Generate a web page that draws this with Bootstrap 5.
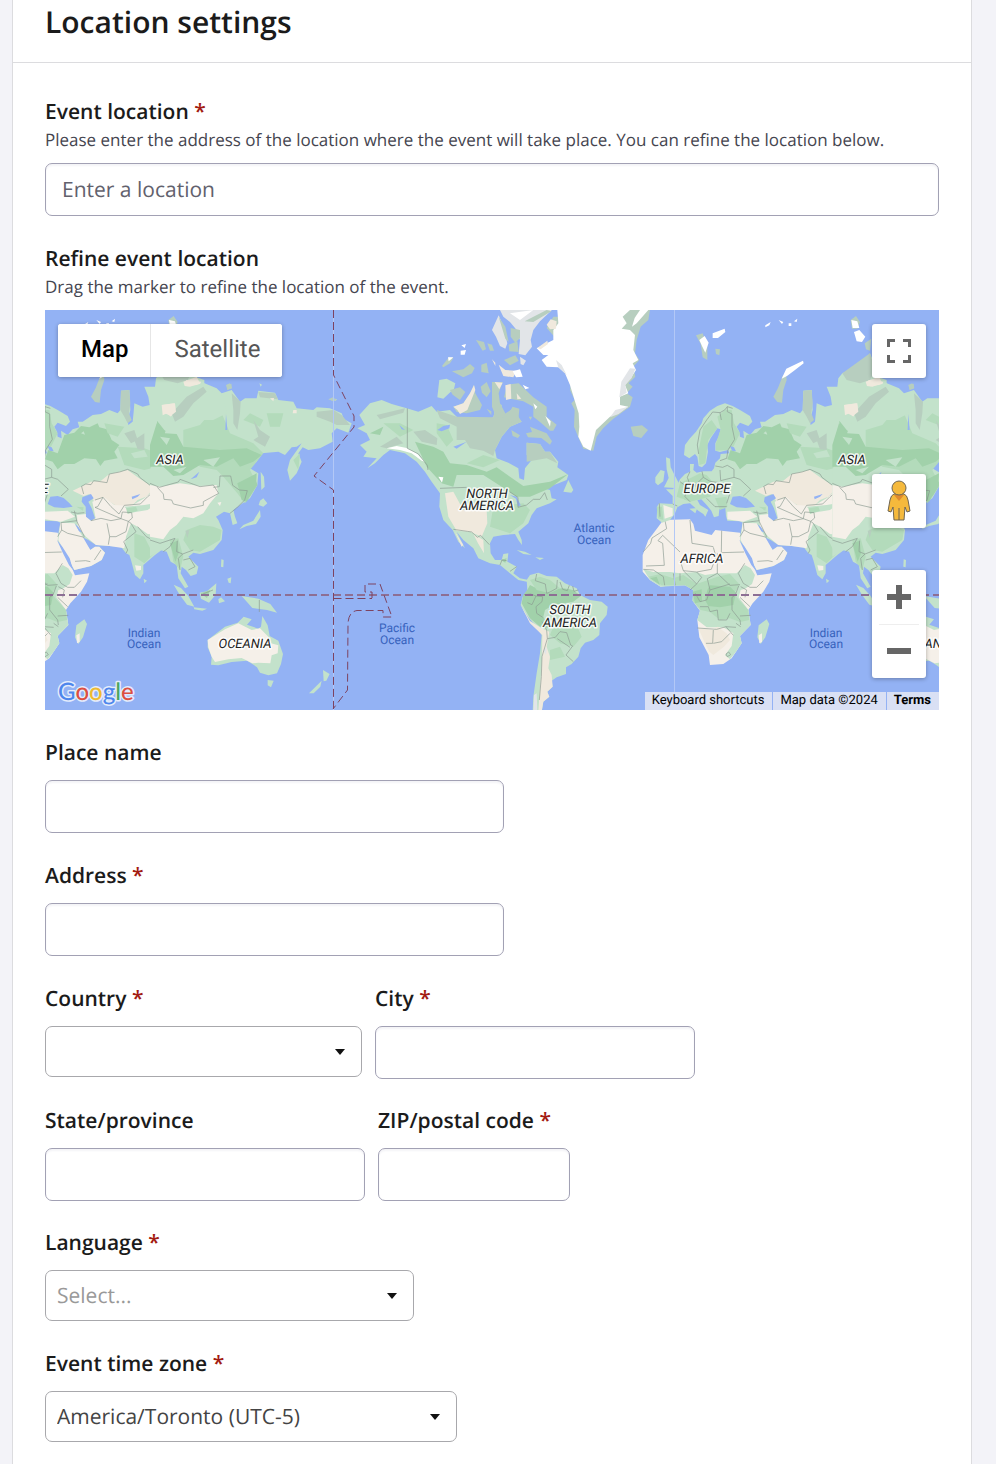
<!DOCTYPE html>
<html lang="en">
<head>
<meta charset="utf-8">
<meta name="viewport" content="width=device-width, initial-scale=1">
<title>Location settings</title>
<link href="https://cdn.jsdelivr.net/npm/bootstrap@5.3.0/dist/css/bootstrap.min.css" rel="stylesheet">
<style>
body { background: #f3f3f8; font-family: "Open Sans", sans-serif; color: #1b1b1b; text-rendering: geometricPrecision; }
.panel { margin: 0 24px 0 12px; background: #fff; border: 1px solid #dcdcdf; border-width: 0 1px; min-height: 100vh; padding-bottom: 23px; }
.panel-head { padding: 0 32px 18px; border-bottom: 1px solid #dcdcdf; }
.panel-head h1 { font-size: 30px; line-height: 44px; font-weight: 600; margin: 0; }
.panel-body { padding: 35px 32px 0; }
.field { margin-bottom: 29px; }
.field-row { margin-bottom: 28px; gap: 13px; }
.field-label { display: block; font-size: 21px; line-height: 28px; font-weight: 600; margin-bottom: 13px; }
.field-label.with-help { margin-bottom: 0; }
.req { color: #a31b12; }
.help { font-size: 17px; line-height: 28px; margin: 0 0 9px; color: #45454f; }
.form-control, .form-select { font-size: 21px; line-height: 28px; border-radius: 7px; color: #45454f; text-rendering: geometricPrecision; }
.form-control { height: 53px; padding: 0 16px; border-color: #a2a1b4; box-shadow: inset 0 2px 2px #f4f4f7; }
.form-control::placeholder { color: #62616d; opacity: 1; }
.form-select { height: 51px; padding: 0 40px 0 11px; border-color: #a8a8ac; color: #444;
  background: #fff url("data:image/svg+xml,%3Csvg xmlns='http://www.w3.org/2000/svg' viewBox='0 0 10 6'%3E%3Cpath d='M0 0h10L5 6z' fill='%23111'/%3E%3C/svg%3E") no-repeat right 16px center / 10px 6px; }
.form-select.unset { color: #999; }
.w-half { width: 459px; max-width: 100%; }
.w-country { width: 317px; } .w-city { width: 320px; } .w-zip { width: 192px; }
.w-lang { width: 369px; max-width: 100%; } .w-zone { width: 412px; max-width: 100%; }
.map-box { height: 400px; background: #93b2f4; font-family: Roboto, sans-serif; overflow: hidden; margin-bottom: 29px; }
.map-box > svg { width: 100%; height: 100%; display: block; }
.map-box button { text-rendering: geometricPrecision; }
.map-btn { background: #fff; border: 0; padding: 0; box-shadow: 0 1px 4px rgba(0,0,0,.3); color: #666; }
.map-types { top: 14px; left: 13px; height: 53px; border-radius: 3px; overflow: hidden; background: #fff; box-shadow: 0 1px 4px rgba(0,0,0,.3); }
.map-types button { border: 0; background: #fff; font-size: 24px; line-height: 50px; padding: 0 22px 3px 23px; color: #565656; }
.map-types button.on { font-weight: 500; color: #000; border-right: 1px solid #e6e6e6; }
.map-tools { top: 14px; right: 13px; bottom: 32px; width: 54px; }
.map-tools button { width: 54px; height: 54px; border-radius: 3px; display: flex; align-items: center; justify-content: center; }
.pegman { margin-bottom: 42px; }
.zoomer { background: #fff; border-radius: 3px; box-shadow: 0 1px 4px rgba(0,0,0,.3); }
.zoomer button { border: 0; background: none; box-shadow: none; padding: 0; }
.zoomer hr { margin: 0 7px -1px; border-color: #bbb; }
.map-legal { right: 0; bottom: 0; font-size: 13px; line-height: 18px; gap: 1px; color: #000; }
.map-legal > * { background: #d9e0f4; padding: 0 8px 0 7px; border: 0; color: #000; text-decoration: none; }
.g-logo { font: 500 24px Lato, sans-serif; stroke: #e4ecfc; stroke-width: 3px; paint-order: stroke; stroke-linejoin: round; }
.lbl { font: italic 13px Roboto, sans-serif; fill: #222; text-anchor: middle; stroke: #fff; stroke-width: 3px; stroke-opacity: .85; paint-order: stroke; stroke-linejoin: round; }
.sea { font: 12px Roboto, sans-serif; fill: #3762bd; text-anchor: middle; }
.c1 { fill: #c3e2cb; } .c2 { fill: #b3dbbb; } .c3 { fill: #a1d1aa; } .tundra { fill: #b7cebf; }
.dry { fill: #f5f0e9; } .dry2 { fill: #f0e9dd; } .ice { fill: #fff; } .ice2 { fill: #e2e5e8; } .water { fill: #93b2f4; }
.bd { fill: none; stroke: #8b9a91; stroke-width: 2; stroke-linejoin: round; }
.dash { fill: none; stroke: #7d4360; stroke-width: 1; stroke-dasharray: 8 4; }
.dash.eq { stroke: #8d6f94; stroke-width: 2; }
</style>
</head>
<body>
<main class="panel">
  <header class="panel-head"><h1>Location settings</h1></header>
  <form class="panel-body">
    <div class="field">
      <label class="field-label with-help" for="loc">Event location <span class="req">*</span></label>
      <p class="help" id="locHelp">Please enter the address of the location where the event will take place. You can refine the location below.</p>
      <input class="form-control" id="loc" type="text" placeholder="Enter a location" aria-describedby="locHelp">
    </div>

    <h2 class="field-label with-help">Refine event location</h2>
    <p class="help">Drag the marker to refine the location of the event.</p>
    <div class="map-box position-relative">
      <svg viewBox="0 0 894 400" preserveAspectRatio="xMidYMid slice" role="img" aria-label="World map">
        <defs>
          <g id="oldworld">
            <!-- Africa -->
            <g transform="translate(-292 600)">
              <path class="dry" d="M100 30L180 28 190 42 195 62 245 75 256 60 275 62 330 68 345 110 365 155 382 196 425 190 418 215 400 245 368 280 355 300 362 345 330 378 335 400 318 425 305 445 280 462 240 465 236 435 208 382 202 330 210 302 188 272 190 240 165 226 120 226 92 230 60 210 38 185 38 135 55 90 85 50z"/>
              <path class="c1" d="M40 178L70 186 120 186 150 190 200 186 225 195 262 190 320 190 345 165 362 175 375 195 366 222 345 236 332 240 326 262 340 280 355 300 362 345 330 378 335 400 318 425 300 448 285 436 305 408 310 370 280 352 230 352 202 330 210 302 188 272 190 240 165 226 92 230 60 210z"/>
              <path class="c2" d="M55 200L90 192 130 205 160 195 200 222 262 200 300 192 330 225 312 250 325 268 355 300 358 330 330 336 300 325 270 330 240 306 212 300 188 272 190 240 165 226 95 226z"/>
              <path class="c3" d="M232 240L240 226 300 230 318 248 310 285 270 292 235 288 225 270zM188 245L215 238 216 275 195 280zM60 205L80 200 90 225z"/>
              <path class="dry2" d="M205 355L250 360 262 350 290 370 300 390 282 410 250 435 238 425 225 400z"/>
              <path class="bd" d="M105 32L110 56 66 84 62 100 40 125M84 92L98 76 150 126M84 92L98 100 103 166 48 168M180 30L186 100 250 110M275 62L274 128 342 126M250 112L258 140 244 178 200 186 160 182 150 150M262 130L262 190 300 226 330 224M40 178L70 180 100 200 104 226M130 190L136 226M150 190L150 212M160 182L200 222 180 240M200 186L215 202 200 222M262 190L232 206 240 240 230 270 210 275 196 250M240 240L300 222M344 160L325 190 340 220 360 232 380 232 400 212M326 228L316 255 306 262 306 300 330 330 332 345M332 230L350 240 345 262M330 262L360 290M362 316L330 318M318 340L332 350M210 290L235 290 240 305 262 300 265 330 290 330 300 310M202 354L260 358 288 350 318 352M250 360L248 400 228 400M250 400L275 395 300 370M288 350L310 376M288 432L296 426 302 434 292 440z"/>
            </g>
            <!-- Europe and western Asia -->
            <g transform="translate(-262 240)">
              <path class="c1" d="M255 40L232 48 210 62 190 85 185 100 168 125 150 145 135 165 132 195 148 205 165 192 172 200 176 228 186 232 198 220 204 185 202 165 212 145 225 125 232 115 242 118 236 140 226 160 226 182 240 186 264 180 268 190 242 192 240 205 226 218 222 235 215 244 190 244 170 248 160 240 162 222 150 222 150 245 135 252 120 268 112 285 98 298 78 298 98 318 98 342 58 340 52 348 50 385 66 398 90 390 104 372 112 352 130 342 150 340 175 362 190 372 196 380 205 360 180 345 172 330 184 328 200 345 214 362 222 382 236 378 238 358 256 354 258 378 262 392 300 394 308 398 302 430 300 452 330 505 350 540 400 528 432 510 442 488 425 470 412 470 398 480 384 462 372 440 392 450 415 465 455 468 490 470 505 490 515 495 520 510 532 555 547 568 557 550 557 525 592 495 612 480 640 482 740 480 740 -30 712 -40 702 -80 690 -110 662 -75 607 -50 595 -35 592 -10 560 -10 572 20 576 45 555 50 530 40 528 65 525 95 512 105 510 92 518 60 515 0 490 2 488 60 480 70 455 60 430 72 405 75 375 95 360 95 365 112 345 118 330 135 310 122 312 145 300 140 298 125 290 110 300 98 325 108 337 95 330 78 300 60 278 48z"/>
              <path class="c3" d="M300 190L320 135 350 128 370 108 395 112 420 100 425 112 448 118 462 150 485 165 470 185 480 205 440 212 428 228 415 208 380 205 350 222 320 222 300 238 285 215 262 208 272 180zM598 92L620 120 640 135 740 160 740 270 690 270 650 250 600 262 590 225 640 230 650 200 600 180z"/>
              <path class="c2" d="M190 110L215 90 232 115 205 150 200 185 196 220 178 225 176 180zM255 60L275 60 282 100 300 130 280 170 262 180 228 182 228 160 242 118 232 80zM480 170L560 175 600 190 600 230 560 240 500 225zM440 100L500 110 480 140 450 130zM120 280L180 250 200 255 230 290 210 320 150 335 110 320zM530 430L560 440 580 480 610 470 560 520 530 500zM225 325L260 320 262 350 240 360zM50 350L66 350 70 390 54 385z"/>
              <path class="c1" d="M370 130L378 124 382 134zM520 190L560 180 570 200 530 205zM600 290L650 270 700 275 660 290z"/>
              <path class="tundra" d="M490 2L515 0 518 40 514 70 522 90 510 100 500 80 488 60zM607 -50L690 -110 705 -60 690 -30 660 -20 620 -30zM500 130L530 120 540 150 520 160zM530 150L560 130 560 180 540 178zM665 80L690 50 720 40 720 70 680 90z"/>
              <path class="dry2" d="M370 290L400 275 430 272 455 252 510 240 540 262 590 295 565 320 540 330 520 350 480 350 440 325 410 335 395 312 378 318 345 302zM612 45L650 40 655 60 640 80 628 70 615 76zM685 -30L730 -25 725 -10 690 -10z"/>
              <path class="dry" d="M404 335L440 322 470 345 520 348 560 325 600 290 630 305 740 290 740 420 650 440 570 432 540 410 520 400 505 440 500 475 455 468 415 465 385 440 360 410 358 375 385 372 400 392 414 385zM308 398L350 400 375 440 398 480 412 470 425 470 442 488 432 510 400 528 350 540 302 450zM262 365L330 362 352 380 310 395 262 388zM70 345L98 355 98 378 74 386z"/>
              <path class="c1" d="M500 350L560 345 600 338 570 360 520 368zM345 345L375 350 382 372 360 368z"/>
              <path class="c2" d="M505 355L535 350 540 362 510 372zM356 350L378 352 376 362z"/>
              <path class="water" d="M270 342L278 320 300 318 318 324 334 338 345 350 318 354 290 352zM374 322L400 312 408 325 392 335 402 355 412 385 400 392 385 380 384 350 372 335zM352 402L362 410 374 428 364 424zM522 320L548 312 540 320 524 328zM560 20L566 40 560 36zM270 168L282 172 288 184 276 182zM298 450L314 470 336 505 346 540 334 525 316 490z"/>
              <path class="bd" d="M278 55L262 50 254 60 240 68 218 66 200 90 180 120 172 165 176 192M240 68L244 90M262 50L262 65 276 72 276 110 284 148 264 180M264 180L260 205 240 212M226 228L248 232 262 226 282 238 282 262 300 268 332 298 310 318M186 244L190 262 210 274 238 278M240 240L242 272 282 262M150 245L142 262 150 285 180 290M120 275L140 290 135 320 150 335M190 262L160 290M225 300L270 310 260 340M200 325L225 350 260 350M58 340L60 380M98 342L112 348M372 290L378 312M370 290L384 282 400 284 408 272 448 278 455 252 486 246 510 238 540 252 546 262 580 288 606 290 570 320 548 342 500 346 484 372 460 350 436 322 412 330M436 322L420 350 412 352 490 386 494 366 522 368 524 384 512 394M606 290L618 300 620 320 650 330 655 342 740 352M606 290L640 285 680 290 700 300M400 392L430 385 460 392 490 386 512 394 505 425 475 440 456 440 452 464M456 440L448 400M350 362L358 395 380 440M310 398L358 392M310 398L312 420 330 430 380 442M312 420L300 440M340 366L360 370 380 368M505 490L510 480 498 455 535 425 520 400 512 394M540 410L566 440 600 458 640 452M398 515L384 512 352 514M430 480L410 510"/>
            </g>
            <!-- Siberia, China and Indochina -->
            <g transform="translate(315 180)">
              <path class="c1" d="M100 50L140 45 160 38 200 55 215 70 245 60 270 95 285 85 320 85 325 62 375 68 385 90 430 95 440 115 490 120 500 112 540 115 575 130 582 148 605 160 595 188 560 175 545 190 548 215 510 235 475 240 458 232 445 250 455 275 440 310 420 332 412 300 420 270 445 235 455 220 440 230 425 232 405 255 385 245 335 250 320 275 300 295 325 310 322 345 300 385 270 405 250 420 255 440 262 460 248 465 240 430 222 425 198 440 205 450 218 480 215 510 190 540 150 552 130 548 115 560 145 590 140 612 122 618 108 600 95 590 92 610 115 650 105 655 85 625 80 585 62 575 50 545 30 540 0 560 0 300z"/>
              <path class="c2" d="M100 180L150 165 180 130 215 130 240 190 310 220 340 250 300 300 322 345 285 400 262 370 220 320 200 300 150 290 100 240zM110 480L150 465 190 470 215 480 210 510 150 545 120 540 100 510zM60 510L85 505 100 560 90 600 70 575zM280 150L300 130 340 150 330 170zM350 130L400 130 390 170 360 170zM430 270L450 250 445 300z"/>
              <path class="c3" d="M20 160L45 190 80 192 100 230 150 235 210 240 290 235 335 255 310 275 270 290 250 265 200 290 150 285 100 315 70 318 40 290 0 290 0 225zM262 340L320 310 318 350 290 395 275 390zM60 520L82 512 86 550 76 575zM300 380L318 330 322 345z"/>
              <path class="c1" d="M160 270L210 262 190 290zM70 300L110 290 90 310zM30 200L60 205 50 225zM180 60L220 80 230 130 190 150 130 150 100 130z"/>
              <path class="tundra" d="M65 130L110 80 160 50 170 65 130 100 100 140 75 155zM245 70L272 95 270 130 262 180 250 160 250 120zM310 150L330 180 360 200 345 230 310 210 325 200zM500 125L550 120 575 135 600 165 560 165 540 155 500 140zM325 66L375 70 384 88 330 82zM228 45L240 40 245 55 232 60zM106 482L118 480 112 505z"/>
              <path class="dry2" d="M36 105L75 100 78 125 62 138 45 130zM100 35L140 20 150 40 120 50 104 48zM430 120L440 120 440 130 428 130zM360 85L372 84 370 94z"/>
              <path class="dry" d="M0 345L30 350 90 340 150 348 200 345 205 370 180 400 160 430 130 445 100 440 80 465 60 480 40 508 0 500zM202 398L214 396 210 408z"/>
              <path class="water" d="M228 132L232 180 226 180zM148 305L140 322 122 328z"/>
              <path class="bd" d="M0 340L28 352 85 336 90 328 150 350 190 345 206 370 160 395 160 406 122 414 70 402 65 390 42 388 40 372 22 352M190 352L208 350 210 318 242 318 248 346 268 360 292 362 284 390 260 414 240 430M0 510L30 520 75 505 60 530 40 545M82 512L80 545 98 552 130 540M98 552L85 565 90 600M100 570L120 565 135 590 115 600"/>
              <path class="c1" d="M332 305L342 320 344 350 334 360zM330 392L340 385 352 400 340 410 326 405zM330 420L332 440 318 462 290 468 268 478 280 465 310 452zM214 568L221 570 220 592 213 590zM232 626L244 622 242 640 236 638zM328 40L336 44 332 50zM545 88L562 88 555 93z"/>
            </g>
            <path class="c1" d="M-184 442l12 4 2 26 12 24 14 26-14 12-32-2 14-28-6-26zM-216 502l16-22 12 4-4 30-16 12-8-8zM386 824l22 10 22 24 18 32-22-6-22-30zM464 848l22-4 28-24-2 34-20 24-24-12zM446 892l40 4-14 6-24-4zM520 868l8-6 12 12-18 6zM590 858l50 8 36 16 20 26-30-8-44-6zM94 946l24-18 8 14-12 40-14 20-10-20zM296 806l10 6-8 8zM-114 596l24-2-6 16zM-140 566l10 0-2 16-8-2z"/>
            <path class="c3" d="M466 850l30-10-10 24z"/>
            <path class="bd" d="M643 870l0 36M474 852l30-12"/>
            <!-- Australia and New Zealand -->
            <path class="c1" d="M488 990L540 950 578 938 596 920 620 928 606 944 640 956 648 950 652 918 668 946 674 978 700 992 714 1032 708 1062 696 1090 670 1096 645 1088 636 1072 622 1062 606 1052 560 1056 520 1066 498 1064 500 1040 488 1012zM668 1110l18 2-8 20-10-6zM834 1080l20 12-10 20-8 2zM792 1150l26-26 12-12-4 18-20 20z"/>
            <path class="dry" d="M488 990L540 958 580 940 620 960 645 955 670 980 678 1000 700 1006 698 1030 680 1036 676 1060 640 1058 622 1060 590 1044 550 1048 510 1056 500 1040 490 1012z"/>
            <path class="dry" d="M94 976l10-6 0 26-8 4zM270 766l18 2 0 12-14 2z"/>
            <!-- arctic islands -->
            <path class="tundra" d="M138 260l14-26 14-36 10-8 2 20-10 30-4 38-14-2zM-94 76l20-6 14 40 0 40-14-8-6-40zM-36 116l14 2-2 18-10-4zM412 100l20-14-4 36-12-4zM370 30l16-12 12 18-8 20-16 0zM850 268l14-6 12 8-12 4zM545 225l14-4 2 14-14 4z"/>
            <path class="ice" d="M163 206l14-30 50-24 2 8-26 20-24 18zM-84 90l16-12 12 20-10 30-10-20zM-44 70l36-14 2 10-22 18-16 0zM372 30l18 4 6 20-20 0zM380 66l16-6 18 20-10 16-16-2zM114 46l16-10-4 10-12 6zM154 30l14 6-4 6zM184 40l8 0 0 8-8 0zM200 34l10-8-2 10z"/>
          </g>
        </defs>
        <rect width="894" height="400" fill="#93b2f4"/>
        <g transform="scale(.33333)">
          <use href="#oldworld"/>
          <use href="#oldworld" x="2047"/>
          <g transform="translate(825 0)">
            <!-- North America -->
            <g transform="translate(90 210)">
              <path class="c1" d="M22 145L45 135 28 105 60 70 95 60 125 72 170 85 205 95 245 78 260 95 300 90 320 110 345 118 375 115 415 118 430 112 440 70 455 75 450 110 480 100 490 80 500 110 515 125 480 140 455 170 435 210 440 235 475 248 505 265 508 295 522 300 525 265 545 240 530 225 530 188 570 192 585 215 600 215 625 245 622 262 655 285 650 300 620 312 580 325 600 330 605 355 620 358 600 370 560 385 545 405 535 430 505 455 515 480 516 495 505 480 495 462 460 465 430 470 420 490 422 520 435 540 455 540 460 522 475 520 472 545 500 560 490 580 510 595 535 600 530 605 505 600 480 580 450 555 420 550 385 535 370 505 340 480 320 455 345 505 325 485 308 450 280 420 268 380 270 340 245 305 225 275 200 245 165 220 120 210 100 225 75 250 52 265 80 235 40 230 50 215 30 195 60 180 50 160zM640 335L655 300 670 330 664 338zM500 510L525 515 545 525 520 522zM556 532L582 534 570 540z"/>
              <path class="tundra" d="M260 90L320 110 430 112 440 70 455 75 450 110 490 85 515 125 480 140 455 170 435 210 430 228 400 212 360 205 345 180 320 180 320 140 270 115zM530 188L570 192 585 215 600 215 622 250 590 235 530 245zM190 155L225 150 262 175 260 195 215 185zM80 105L165 85 160 98 90 118zM90 200L140 170 160 190 110 205z"/>
              <path class="c3" d="M195 185L250 200 280 215 300 250 350 255 410 275 440 262 480 290 520 318 600 305 655 282 600 325 540 350 500 350 470 330 400 285 320 285 310 320 275 310 230 260zM440 420L500 385 530 400 500 440 450 450zM60 160L100 140 90 165zM452 540L470 535 466 548z"/>
              <path class="c2" d="M260 130L290 135 310 180 290 200 260 160zM350 250L400 225 450 240 400 262zM430 380L520 370 540 390 520 430 480 460 420 440zM100 130L150 130 190 150 150 170z"/>
              <path class="dry2" d="M285 340L310 335 340 390 410 390 412 430 395 470 360 455 320 452 295 410zM370 462L400 480 402 520 384 490zM315 455L340 495 335 500z"/>
              <path class="ice" d="M110 205L140 198 170 204 200 220 225 245 215 242 185 220 150 210zM265 290L280 292 276 308z"/>
              <path class="water" d="M262 150L280 138 300 134 298 145 275 154zM310 200L350 185 320 206zM148 135L165 150 155 148zM480 345L500 350 512 376 504 380 498 356z"/>
              <path class="bd" d="M172 85L172 205 205 222 232 256 234 270M270 325L350 322M480 336L504 352 504 382 530 375 550 358 570 358 584 338 592 360M310 448L352 454 365 456 382 472 392 466 418 494M450 555L456 540 470 542M480 574L500 560"/>
            </g>
            <!-- Canadian archipelago -->
            <path class="c1" d="M352 262L358 210 380 206 406 220 402 236 370 266z"/>
            <path class="tundra" d="M366 168L388 140 400 144 390 160 370 172zM396 184L430 178 450 162 464 174 456 190 430 202zM484 164L500 158 506 190 484 186zM390 240L420 232 436 246 420 270 398 254zM400 290L430 280 450 250 462 225 466 250 486 285 480 300 440 310 410 306zM482 230L500 216 512 244 500 262 486 248zM516 216L548 216 536 250 540 280 556 310 550 324 528 320 516 290zM552 262L562 224 596 220 640 262 680 290 680 320 710 344 700 362 690 362 660 336 640 320 640 290 610 274zM578 290L598 296 596 320 570 340 560 320zM630 350L680 370 696 394 690 404 664 384 624 382 618 370 636 366zM574 360L600 376 594 384 578 378zM468 90L492 96 498 118 488 122zM552 150L586 136 596 152 570 166zM566 104L592 94 596 126 568 124zM502 100L516 104 522 122 510 122zM500 296L514 304 514 316zM626 320L636 320 632 330zM932 350L966 346 984 360 964 384 940 378z"/>
            <path class="dry2" d="M400 290L430 280 450 250 462 225 466 240 454 270 442 300 420 312 412 300zM524 216L548 218 538 238zM556 226L572 222 574 266 558 270zM536 164L556 180 590 182 580 202 550 198zM590 250L604 266 592 268zM516 148L526 158 526 168z"/>
            <path class="ice2" d="M516 60L536 16 548 44 562 100 556 116 540 108 528 80zM540 0L696 0 660 34 640 60 632 90 636 110 616 136 596 132 600 90 590 60 570 36 550 20zM600 140L618 152 610 166 602 162z"/>
            <path class="tundra" d="M536 20L556 50 566 96 556 86zM572 54L600 60 600 84 586 98 572 80zM614 34L680 0 694 4 640 36z"/>
            <path class="ice" d="M578 184L600 178 608 200 588 202zM422 122L438 120 434 134 422 134zM424 106L438 102 434 114zM384 142L400 142 386 154zM640 280L652 290 646 298zM676 318L692 334 690 350zM608 224L628 234 616 238zM570 10L640 0 600 30z"/>
            <!-- Greenland -->
            <path class="tundra" d="M680 54L700 20 720 20 720 0 990 0 985 30 962 50 950 90 945 130 958 150 940 170 946 200 926 220 938 230 920 250 938 262 930 290 880 326 850 354 830 380 820 422 790 416 776 384 762 350 764 300 754 280 764 270 750 240 756 190 800 190z"/>
            <path class="ice" d="M712 0L715 40 700 60 700 90 650 115 670 135 685 135 665 150 680 170 715 172 735 190 750 225 762 265 776 310 778 350 775 380 790 410 812 422 818 400 828 360 870 320 925 290 900 285 900 260 925 250 915 225 935 200 948 180 938 160 955 150 940 120 945 75 930 60 905 56 920 40 908 20 930 0zM950 40L985 0 960 0 944 24 936 50z"/>
            <path class="ice2" d="M904 215L930 175 946 176 935 204 916 225 920 248 898 262zM870 322L886 300 925 290 896 312zM708 150L725 165 740 195 715 172z"/>
            <path class="dry2" d="M652 114L682 92 684 102 662 118zM680 44L692 28 710 34 708 56 690 58z"/>
            <!-- South America -->
            <g transform="translate(570 750)">
              <path class="c1" d="M50 60L60 45 85 38 110 48 140 50 165 70 200 85 210 105 240 120 275 125 293 140 290 165 270 190 268 225 250 240 225 248 212 265 205 290 185 312 168 322 168 342 140 352 125 362 128 380 112 395 118 410 100 425 95 455 68 455 70 410 80 340 90 280 95 225 70 190 45 160 32 135 38 110 52 90z"/>
              <path class="c3" d="M40 105L52 90 60 75 90 90 160 85 190 90 212 108 190 125 130 135 105 150 100 170 120 205 90 200 60 175 35 130z"/>
              <path class="c2" d="M60 60L90 50 120 60 150 85 120 100 80 90zM130 200L200 195 215 230 190 260 150 250 120 225zM120 270L150 260 165 290 120 300z"/>
              <path class="dry2" d="M32 135L60 183 95 205 118 215 110 260 120 290 115 325 125 345 128 380 112 395 118 410 100 425 95 455 85 455 90 380 96 300 97 225 60 190z"/>
              <path class="ice2" d="M72 405L80 400 82 450 70 450zM100 270L110 262 108 285z"/>
              <path class="bd" d="M80 42L76 62 106 72 110 100 120 96 140 85 142 60M150 66L158 88 172 92 178 76M188 78L192 94 205 90M42 104L62 102 78 108 66 134 52 128M78 108L98 110 96 125 78 140 80 160 98 172M96 185L110 210 112 236 136 232 150 215 170 218 182 255 188 258 168 285 190 305M112 236L96 290 94 350 88 420M142 236L180 262"/>
            </g>
          </g>
        </g>
        <path d="M288.500 0V400M629.500 0V400" stroke="#b3c8f6"/>
        <path class="dash eq" d="M0 285H894"/>
        <path class="dash" d="M288.500 0V65L309 106V117L269 166 288.500 180V400M288.500 288.500H327M327 288V282H320V274H335L347 307H338V300.500H312Q303 302 303 315L302.500 380 288 399"/>
        <g class="lbl">
          <text x="125" y="154">ASIA</text><text x="807" y="154">ASIA</text>
          <text x="-20" y="183">EUROPE</text><text x="662" y="183">EUROPE</text>
          <text x="442" y="188">NORTH</text><text x="442" y="200">AMERICA</text>
          <text x="657" y="253">AFRICA</text><text x="200" y="338">OCEANIA</text><text x="882" y="338">OCEANIA</text>
          <text x="525" y="304">SOUTH</text><text x="525" y="317">AMERICA</text>
        </g>
        <g class="sea">
          <text x="99" y="327">Indian</text><text x="99" y="338">Ocean</text>
          <text x="781" y="327">Indian</text><text x="781" y="338">Ocean</text>
          <text x="549" y="222">Atlantic</text><text x="549" y="234">Ocean</text>
          <text x="352" y="322">Pacific</text><text x="352" y="334">Ocean</text>
        </g>
        <text class="g-logo" x="13" y="390"><tspan fill="#4e86ec">G</tspan><tspan fill="#dc4f41">o</tspan><tspan fill="#eebb30">o</tspan><tspan fill="#4e86ec">g</tspan><tspan fill="#4ca55f">l</tspan><tspan fill="#dc4f41">e</tspan></text>
      </svg>
      <div class="map-types position-absolute d-flex">
        <button type="button" class="on">Map</button><button type="button">Satellite</button>
      </div>
      <div class="map-tools position-absolute d-flex flex-column">
        <button type="button" class="map-btn mb-auto" aria-label="Toggle fullscreen view">
          <svg width="24" height="24" viewBox="0 0 24 24" fill="none" stroke="#666" stroke-width="3"><path d="M1.500 8V1.500H8M16 1.500H22.500V8M22.500 16V22.500H16M8 22.500H1.500V16"/></svg>
        </button>
        <button type="button" class="map-btn pegman" aria-label="Street View">
          <svg width="26" height="42" viewBox="0 0 26 42" stroke="#6e6553" stroke-width="1" stroke-linejoin="round">
            <path fill="#f5b93c" d="M8 14h10q3 1 4 6l2 11-3 1-2-5-1 13H8L7 27l-2 5-3-1 2-11q1-5 4-6z"/>
            <path fill="#e08a2e" stroke="none" d="M8 15h10l-5 6z"/><path fill="none" d="M13 28v12"/>
            <circle cx="13" cy="8" r="7" fill="#f5b93c"/>
          </svg>
        </button>
        <div class="zoomer">
          <button type="button" aria-label="Zoom in"><svg width="24" height="24" viewBox="0 0 24 24" fill="#666"><path d="M9 0h6v9h9v6h-9v9H9v-9H0V9h9z"/></svg></button>
          <hr>
          <button type="button" aria-label="Zoom out"><svg width="24" height="6" viewBox="0 0 24 6" fill="#666"><path d="M0 0h24v6H0z"/></svg></button>
        </div>
      </div>
      <div class="map-legal position-absolute d-flex">
        <button type="button">Keyboard shortcuts</button><span>Map data ©2024</span><a href="#terms" class="fw-bold">Terms</a>
      </div>
    </div>

    <div class="field w-half">
      <label class="field-label" for="place">Place name</label>
      <input class="form-control" id="place" type="text">
    </div>
    <div class="field w-half">
      <label class="field-label" for="addr">Address <span class="req">*</span></label>
      <input class="form-control" id="addr" type="text">
    </div>
    <div class="field-row d-flex flex-wrap">
      <div class="w-country">
        <label class="field-label" for="country">Country <span class="req">*</span></label>
        <select class="form-select" id="country"><option></option></select>
      </div>
      <div class="w-city">
        <label class="field-label" for="city">City <span class="req">*</span></label>
        <input class="form-control" id="city" type="text">
      </div>
    </div>
    <div class="field-row d-flex flex-wrap">
      <div class="w-city">
        <label class="field-label" for="state">State/province</label>
        <input class="form-control" id="state" type="text">
      </div>
      <div class="w-zip">
        <label class="field-label" for="zip">ZIP/postal code <span class="req">*</span></label>
        <input class="form-control" id="zip" type="text">
      </div>
    </div>
    <div class="field w-lang">
      <label class="field-label" for="lang">Language <span class="req">*</span></label>
      <select class="form-select unset" id="lang"><option>Select...</option></select>
    </div>
    <div class="w-zone">
      <label class="field-label" for="zone">Event time zone <span class="req">*</span></label>
      <select class="form-select" id="zone"><option>America/Toronto (UTC-5)</option></select>
    </div>
  </form>
</main>
<script src="https://cdn.jsdelivr.net/npm/bootstrap@5.3.0/dist/js/bootstrap.bundle.min.js"></script>
</body>
</html>
